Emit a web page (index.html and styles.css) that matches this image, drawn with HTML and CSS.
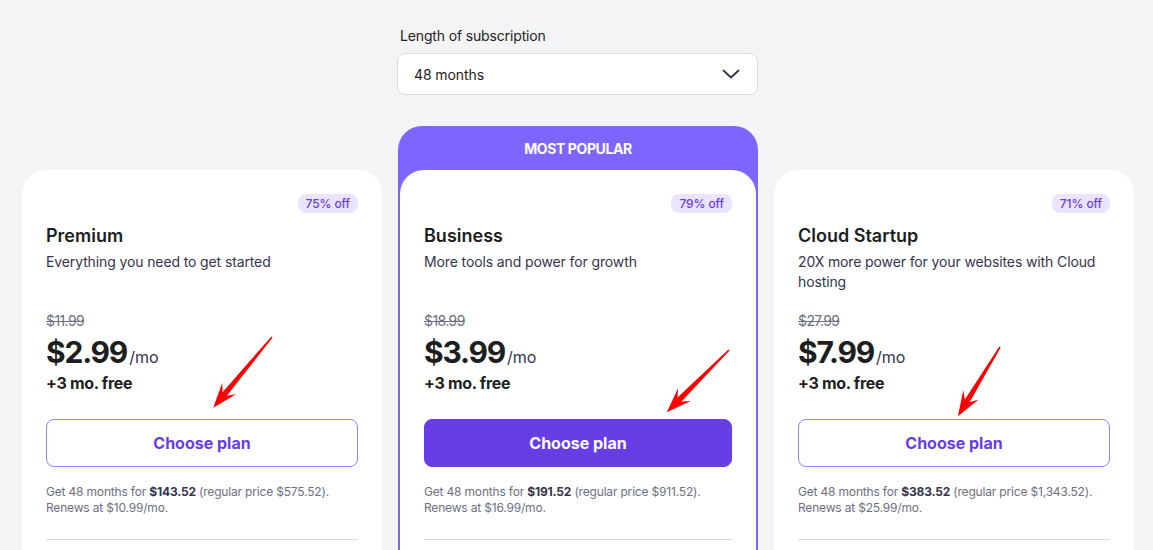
FILE: index.html
```html
<!DOCTYPE html>
<html lang="en">
<head>
<meta charset="utf-8">
<title>Pricing</title>
<link rel="stylesheet" href="styles.css">
</head>
<body>
<div class="page">
  <div class="grid">
    <div class="spacer"></div>
    <div class="period">
      <div class="period-label">Length of subscription</div>
      <div class="select">
        <span>48 months</span>
        <svg class="chev" width="18" height="10" viewBox="0 0 18 10"><path d="M1.5 1.5 L9 8.5 L16.5 1.5" fill="none" stroke="#36344d" stroke-width="1.8" stroke-linecap="round" stroke-linejoin="round"/></svg>
      </div>
    </div>
    <div class="spacer"></div>

    <div class="card side">
      <div class="badge-row"><span class="badge">75% off</span></div>
      <div class="title">Premium</div>
      <div class="desc">Everything you need to get started</div>
      <div class="old">$11.99</div>
      <div class="price"><span class="amount">$2.99</span><span class="per">/mo</span></div>
      <div class="free">+3 mo. free</div>
      <button class="btn">Choose plan</button>
      <div class="note">Get 48 months for <b>$143.52</b> (regular price $575.52).<br>Renews at $10.99/mo.</div>
      <div class="divider"></div>
    </div>

    <div class="popular">
      <div class="popular-head">MOST POPULAR</div>
      <div class="card inner">
        <div class="badge-row"><span class="badge">79% off</span></div>
        <div class="title">Business</div>
        <div class="desc">More tools and power for growth</div>
        <div class="old">$18.99</div>
        <div class="price"><span class="amount">$3.99</span><span class="per">/mo</span></div>
        <div class="free">+3 mo. free</div>
        <button class="btn btn-primary">Choose plan</button>
        <div class="note">Get 48 months for <b>$191.52</b> (regular price $911.52).<br>Renews at $16.99/mo.</div>
        <div class="divider"></div>
      </div>
    </div>

    <div class="card side">
      <div class="badge-row"><span class="badge">71% off</span></div>
      <div class="title">Cloud Startup</div>
      <div class="desc">20X more power for your websites with Cloud hosting</div>
      <div class="old">$27.99</div>
      <div class="price"><span class="amount">$7.99</span><span class="per">/mo</span></div>
      <div class="free">+3 mo. free</div>
      <button class="btn">Choose plan</button>
      <div class="note">Get 48 months for <b>$383.52</b> (regular price $1,343.52).<br>Renews at $25.99/mo.</div>
      <div class="divider"></div>
    </div>
  </div>

  <svg class="arrows" width="1153" height="550" viewBox="0 0 1153 550">
    <polygon transform="translate(272 337) rotate(129.7)" points="0,-0.8 74,-2.8 67,-9 92,0 67,9 74,2.8 0,0.8" fill="#ff0000"/>
    <polygon transform="translate(729 350) rotate(135)" points="0,-0.8 70,-2.8 63,-9 88,0 63,9 70,2.8 0,0.8" fill="#ff0000"/>
    <polygon transform="translate(1000 347) rotate(121.3)" points="0,-0.8 63,-2.8 56,-9 81,0 56,9 63,2.8 0,0.8" fill="#ff0000"/>
  </svg>
</div>
</body>
</html>
```
FILE: styles.css
```css
* { box-sizing: border-box; }
html, body {
  margin: 0;
  padding: 0;
  height: 550px;
  overflow: hidden;
  background: #f4f4f6;
  font-family: Inter, "Noto Sans", "Liberation Sans", sans-serif;
  color: #1d1e20;
}
.page {
  position: relative;
  width: 1153px;
  height: 550px;
  padding: 26px 0 0 22px;
}
.grid {
  display: grid;
  grid-template-columns: 360px 360px 360px;
  column-gap: 16px;
  align-items: start;
}
.period {
  display: flex;
  flex-direction: column;
}
.period-label {
  font-size: 14px;
  line-height: 20px;
  padding-left: 2px;
  color: #1d1e20;
  margin-bottom: 7px;
  letter-spacing: -0.15px;
}
.select {
  height: 42px;
  background: #fff;
  border: 1px solid #dadce0;
  border-radius: 8px;
  display: flex;
  align-items: center;
  justify-content: space-between;
  padding: 0 17px 0 16px;
  font-size: 14px;
  color: #1d1e20;
  margin-left: -1px;
  letter-spacing: -0.1px;
}
.chev { display: block; }

.card {
  background: #fff;
  border-radius: 24px;
  padding: 24px 24px 0;
  height: 420px;
}
.side { margin-top: 75px; }
.popular {
  margin-top: 31px;
  background: #7f65ff;
  border-radius: 24px 24px 0 0;
  padding: 0 2px;
  height: 500px;
}
.popular-head {
  height: 44px;
  display: flex;
  align-items: center;
  justify-content: center;
  color: #fff;
  font-size: 14px;
  font-weight: 700;
  letter-spacing: -0.4px;
}
.inner {
  padding: 24px 24px 0;
}
.badge-row {
  display: flex;
  justify-content: flex-end;
}
.badge {
  background: #ebe4ff;
  color: #673de6;
  font-size: 12px;
  line-height: 19px;
  height: 19px;
  padding: 0 8px;
  border-radius: 8px;
  font-weight: 500;
  letter-spacing: -0.1px;
}
.title {
  margin-top: 10px;
  font-size: 18px;
  line-height: 24px;
  font-weight: 600;
  padding-top: 1px;
  height: 24px;
}
.desc {
  margin-top: 5px;
  font-size: 14px;
  line-height: 20px;
  min-height: 40px;
  color: #36344d;
  letter-spacing: -0.12px;
}
.old {
  margin-top: 19px;
  font-size: 14px;
  line-height: 20px;
  color: #6d7081;
  text-decoration: line-through;
  letter-spacing: -0.6px;
}
.price {
  height: 40px;
  padding-top: 1px;
  display: flex;
  align-items: baseline;
  line-height: 40px;
}
.amount {
  font-size: 30px;
  font-weight: 700;
  letter-spacing: -1.2px;
}
.per {
  font-size: 16px;
  color: #36344d;
  margin-left: 2px;
}
.free {
  font-size: 16px;
  line-height: 24px;
  font-weight: 700;
  letter-spacing: -0.3px;
}
.btn {
  display: block;
  width: 100%;
  height: 48px;
  margin-top: 24px;
  border: 1px solid #8c85ff;
  background: #fff;
  color: #673de6;
  border-radius: 8px;
  font-family: inherit;
  font-size: 16px;
  font-weight: 700;
}
.btn-primary {
  background: #673de6;
  border-color: #673de6;
  color: #fff;
}
.note {
  margin-top: 17px;
  font-size: 12px;
  line-height: 16px;
  color: #6d7081;
  letter-spacing: -0.18px;
}
.note b {
  color: #36344d;
  font-weight: 700;
}
.divider {
  margin-top: 23px;
  height: 1px;
  background: #dadce0;
}
.arrows {
  position: absolute;
  left: 0;
  top: 0;
  pointer-events: none;
}
```
